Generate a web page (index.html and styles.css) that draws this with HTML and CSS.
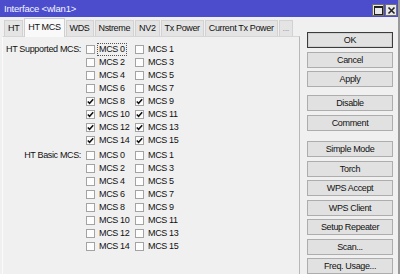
FILE: index.html
```html
<!DOCTYPE html>
<html>
<head>
<meta charset="utf-8">
<link rel="stylesheet" href="styles.css">
</head>
<body>
<div class="window">
  <div class="titlebar">
    <span class="title">Interface &lt;wlan1&gt;</span>
    <div class="tb-btns">
      <span class="tb-btn"><svg width="9" height="9" viewBox="0 0 9 9"><rect x="0.5" y="0.5" width="8" height="8" fill="none" stroke="#222" stroke-width="1"/><line x1="0" y1="1.5" x2="9" y2="1.5" stroke="#222" stroke-width="1"/></svg></span>
      <span class="tb-btn"><svg width="9" height="9" viewBox="0 0 9 9"><path d="M1.5 1.5 L7.5 7.5 M7.5 1.5 L1.5 7.5" stroke="#222" stroke-width="1.6"/></svg></span>
    </div>
  </div>
  <div class="main">
    <div class="left">
      <div class="tabs">
        <span class="tab">HT</span>
        <span class="tab active">HT MCS</span>
        <span class="tab">WDS</span>
        <span class="tab">Nstreme</span>
        <span class="tab">NV2</span>
        <span class="tab">Tx Power</span>
        <span class="tab">Current Tx Power</span>
        <span class="tab more">...</span>
      </div>
      <div class="panel">
        <div class="group">
          <div class="glabel">HT Supported MCS:</div>
          <div class="opts">
            <label class="opt"><span class="cb"></span><span class="txt focus">MCS 0</span></label>
            <label class="opt"><span class="cb"></span><span class="txt">MCS 1</span></label>
            <label class="opt"><span class="cb"></span><span class="txt">MCS 2</span></label>
            <label class="opt"><span class="cb"></span><span class="txt">MCS 3</span></label>
            <label class="opt"><span class="cb"></span><span class="txt">MCS 4</span></label>
            <label class="opt"><span class="cb"></span><span class="txt">MCS 5</span></label>
            <label class="opt"><span class="cb"></span><span class="txt">MCS 6</span></label>
            <label class="opt"><span class="cb"></span><span class="txt">MCS 7</span></label>
            <label class="opt"><span class="cb on"><svg width="7" height="7" viewBox="0 0 7 7"><path d="M0.8 3.4 L2.6 5.3 L6.2 1.2" fill="none" stroke="#111" stroke-width="1.5"/></svg></span><span class="txt">MCS 8</span></label>
            <label class="opt"><span class="cb on"><svg width="7" height="7" viewBox="0 0 7 7"><path d="M0.8 3.4 L2.6 5.3 L6.2 1.2" fill="none" stroke="#111" stroke-width="1.5"/></svg></span><span class="txt">MCS 9</span></label>
            <label class="opt"><span class="cb on"><svg width="7" height="7" viewBox="0 0 7 7"><path d="M0.8 3.4 L2.6 5.3 L6.2 1.2" fill="none" stroke="#111" stroke-width="1.5"/></svg></span><span class="txt">MCS 10</span></label>
            <label class="opt"><span class="cb on"><svg width="7" height="7" viewBox="0 0 7 7"><path d="M0.8 3.4 L2.6 5.3 L6.2 1.2" fill="none" stroke="#111" stroke-width="1.5"/></svg></span><span class="txt">MCS 11</span></label>
            <label class="opt"><span class="cb on"><svg width="7" height="7" viewBox="0 0 7 7"><path d="M0.8 3.4 L2.6 5.3 L6.2 1.2" fill="none" stroke="#111" stroke-width="1.5"/></svg></span><span class="txt">MCS 12</span></label>
            <label class="opt"><span class="cb on"><svg width="7" height="7" viewBox="0 0 7 7"><path d="M0.8 3.4 L2.6 5.3 L6.2 1.2" fill="none" stroke="#111" stroke-width="1.5"/></svg></span><span class="txt">MCS 13</span></label>
            <label class="opt"><span class="cb on"><svg width="7" height="7" viewBox="0 0 7 7"><path d="M0.8 3.4 L2.6 5.3 L6.2 1.2" fill="none" stroke="#111" stroke-width="1.5"/></svg></span><span class="txt">MCS 14</span></label>
            <label class="opt"><span class="cb on"><svg width="7" height="7" viewBox="0 0 7 7"><path d="M0.8 3.4 L2.6 5.3 L6.2 1.2" fill="none" stroke="#111" stroke-width="1.5"/></svg></span><span class="txt">MCS 15</span></label>
          </div>
        </div>
        <div class="group second">
          <div class="glabel">HT Basic MCS:</div>
          <div class="opts">
            <label class="opt"><span class="cb"></span><span class="txt">MCS 0</span></label>
            <label class="opt"><span class="cb"></span><span class="txt">MCS 1</span></label>
            <label class="opt"><span class="cb"></span><span class="txt">MCS 2</span></label>
            <label class="opt"><span class="cb"></span><span class="txt">MCS 3</span></label>
            <label class="opt"><span class="cb"></span><span class="txt">MCS 4</span></label>
            <label class="opt"><span class="cb"></span><span class="txt">MCS 5</span></label>
            <label class="opt"><span class="cb"></span><span class="txt">MCS 6</span></label>
            <label class="opt"><span class="cb"></span><span class="txt">MCS 7</span></label>
            <label class="opt"><span class="cb"></span><span class="txt">MCS 8</span></label>
            <label class="opt"><span class="cb"></span><span class="txt">MCS 9</span></label>
            <label class="opt"><span class="cb"></span><span class="txt">MCS 10</span></label>
            <label class="opt"><span class="cb"></span><span class="txt">MCS 11</span></label>
            <label class="opt"><span class="cb"></span><span class="txt">MCS 12</span></label>
            <label class="opt"><span class="cb"></span><span class="txt">MCS 13</span></label>
            <label class="opt"><span class="cb"></span><span class="txt">MCS 14</span></label>
            <label class="opt"><span class="cb"></span><span class="txt">MCS 15</span></label>
          </div>
        </div>
      </div>
    </div>
    <div class="buttons">
      <div class="bgroup">
        <span class="btn default">OK</span>
        <span class="btn">Cancel</span>
        <span class="btn">Apply</span>
      </div>
      <div class="bgroup">
        <span class="btn">Disable</span>
        <span class="btn">Comment</span>
      </div>
      <div class="bgroup">
        <span class="btn">Simple Mode</span>
        <span class="btn">Torch</span>
        <span class="btn">WPS Accept</span>
        <span class="btn">WPS Client</span>
        <span class="btn">Setup Repeater</span>
        <span class="btn">Scan...</span>
        <span class="btn">Freq. Usage...</span>
      </div>
    </div>
  </div>
</div>
</body>
</html>
```

FILE: styles.css
```css
* { box-sizing: border-box; }
html, body { margin: 0; padding: 0; }
body {
  font-family: "Liberation Sans", Arial, sans-serif;
  font-size: 9px;
  letter-spacing: -0.35px;
  color: #111;
  background: #f0f0f0;
}
.window {
  width: 400px;
  height: 274px;
  overflow: hidden;
  background: #f0f0f0;
  border-right: 2px solid #9a9a9a;
  display: flex;
  flex-direction: column;
}
.titlebar {
  height: 17px;
  flex: none;
  background: #4b4dcd;
  color: #f4f4ff;
  display: flex;
  align-items: center;
  justify-content: space-between;
  padding: 0 1px 0 4px;
}
.title { line-height: 17px; font-size: 9.5px; letter-spacing: -0.2px; }
.tb-btns { display: flex; gap: 1px; align-self: flex-start; margin-top: 4px; }
.tb-btn {
  width: 12px;
  height: 12px;
  background: #e8e8e8;
  border: 1px solid #707070;
  display: flex;
  align-items: center;
  justify-content: center;
}
.tb-btn svg { display: block; }
.main { flex: 1; display: flex; min-height: 0; }
.left { width: 300px; flex: none; display: flex; flex-direction: column; }
.tabs {
  height: 19px;
  flex: none;
  display: flex;
  align-items: flex-end;
  gap: 1px;
  padding-left: 4px;
}
.tab {
  height: 16px;
  line-height: 15px;
  padding: 0 3px;
  background: #e4e4e4;
  border: 1px solid #d2d2d2;
  border-bottom: none;
  white-space: nowrap;
  color: #111;
}
.tab.active {
  height: 19px;
  line-height: 17px;
  background: #f9f9f9;
  border-color: #cfcfcf;
  position: relative;
  margin-bottom: -1px;
  z-index: 1;
}
.tab.more { color: #9a8fae; padding: 0 3px; }
.panel {
  flex: 1;
  margin-left: 2px;
  width: 298px;
  border-top: 1px solid #d6d6d6;
  border-left: 1px solid #fafafa;
  border-right: 1px solid #b8b8b8;
  padding-top: 6px;
  background: #f0f0f0;
}
.group { display: flex; }
.group.second { margin-top: 2px; }
.glabel {
  width: 78px;
  flex: none;
  text-align: right;
  line-height: 13px;
  white-space: nowrap;
}
.opts {
  margin-left: 5px;
  display: grid;
  grid-template-columns: 49px 49px;
  grid-auto-rows: 13px;
}
.opt {
  display: flex;
  align-items: center;
  white-space: nowrap;
}
.cb {
  width: 9px;
  height: 9px;
  flex: none;
  border: 1px solid #a3a3a3;
  background: #fdfdfd;
  display: flex;
  align-items: center;
  justify-content: center;
}
.cb svg { display: block; }
.txt {
  margin-left: 2px;
  padding: 0 1px;
  border: 1px dotted transparent;
  line-height: 11px;
}
.txt.focus { border-color: #555; }
.buttons {
  margin-left: 7px;
  width: 86px;
  flex: none;
  padding-top: 15px;
  display: flex;
  flex-direction: column;
}
.bgroup { display: flex; flex-direction: column; gap: 3.5px; }
.bgroup + .bgroup { margin-top: 8px; }
.bgroup:last-child { margin-top: 10.5px; }
.btn {
  height: 16px;
  line-height: 14px;
  text-align: center;
  background: #e1e1e1;
  border: 1px solid #adadad;
  white-space: nowrap;
}
.btn.default { border: 1px solid #3c3c3c; box-shadow: inset 0 0 0 1px #d0d0d0; }
```
